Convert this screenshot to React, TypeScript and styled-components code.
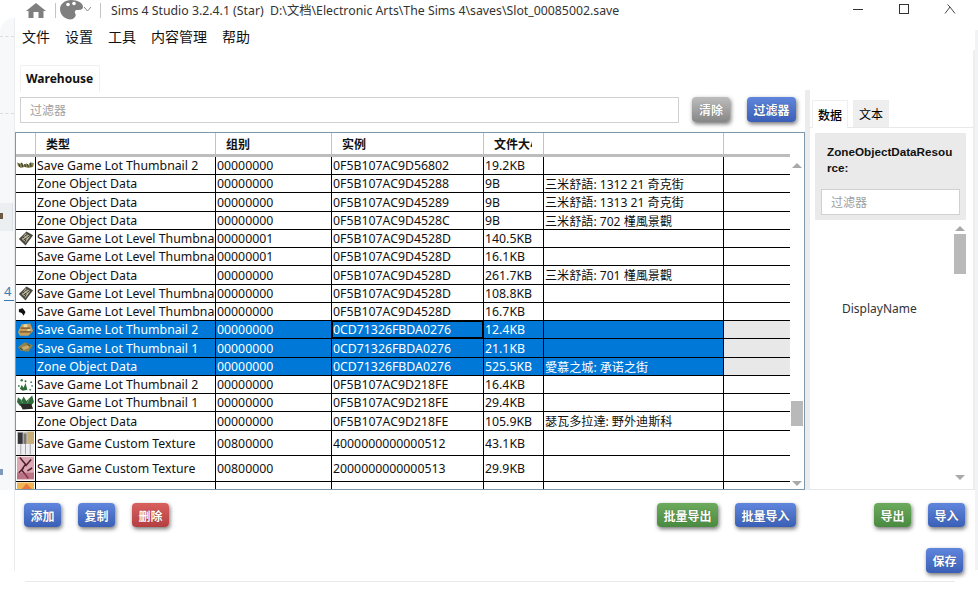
import React, { FC } from 'react'
import styled, { createGlobalStyle } from 'styled-components'

const LATIN = `"Noto Sans", "Noto Sans CJK SC", sans-serif`

const GlobalStyle = createGlobalStyle`
  html, body {
    margin: 0;
    padding: 0;
    background: #fff;
    overflow: hidden;
  }
  * {
    box-sizing: border-box;
  }
`

const Page = styled.div`
  width: 978px;
  height: 589px;
  display: flex;
  background: #fff;
  font-family: ${LATIN};
  color: #111;
  overflow: hidden;
`

const Gutter = styled.div`
  position: relative;
  width: 15px;
  height: 553px;
  margin-top: 18px;
  flex-shrink: 0;
  background: linear-gradient(#f6f8fa 472px, #fff 472px);
  border-top-left-radius: 14px;
  border-right: 1px solid #eaecef;
`

const BehindDash = styled.span<{ $top: number }>`
  position: absolute;
  top: ${p => p.$top}px;
  left: 0;
  width: 14px;
  border-top: 1px dashed #d8dde2;
`

const BehindCard = styled.div`
  position: absolute;
  top: 185px;
  left: 0;
  width: 13px;
  height: 28px;
  background: #eceff1;
  border-right: 1px solid #dcdfe6;
`

const BehindBlip = styled.span<{ $top: number; $color: string }>`
  position: absolute;
  top: ${p => p.$top}px;
  left: 0;
  width: 3px;
  height: 6px;
  background: ${p => p.$color};
`

const BehindLink = styled.span`
  position: absolute;
  top: 265px;
  left: 4px;
  width: 10px;
  font-size: 13px;
  line-height: 17px;
  color: #3a78b5;
  border-bottom: 1px solid #3a78b5;
`

const Main = styled.div`
  width: 960px;
  height: 582px;
  display: flex;
  flex-direction: column;
  flex-shrink: 0;
`

const RightEdge = styled.div`
  width: 3px;
  height: 540px;
  margin-top: 30px;
  background: #f1f3f5;
`

const TitleBar = styled.div`
  height: 24px;
  padding: 0 0 4px 11px;
  display: flex;
  align-items: center;
  flex-shrink: 0;
`

const TitleSep = styled.span<{ $before: number; $after: number }>`
  width: 1px;
  height: 15px;
  margin: 0 ${p => p.$after}px 0 ${p => p.$before}px;
  background: #c4c4c4;
`

const TitleText = styled.span`
  font-size: 12.3px;
  color: #333;
  white-space: nowrap;
  width: 724px;
`

const WinButton = styled.span`
  width: 46px;
  display: flex;
  justify-content: center;
  margin-top: -2px;
`

const MenuBar = styled.div`
  height: 26px;
  padding: 0 0 2px 7px;
  display: flex;
  align-items: center;
  gap: 15px;
  font-family: "Noto Sans CJK SC", sans-serif;
  font-size: 14px;
  flex-shrink: 0;
`

const Panes = styled.div`
  height: 440px;
  display: flex;
  flex-shrink: 0;
`

const LeftPane = styled.div`
  width: 790px;
  padding-top: 15px;
  display: flex;
  flex-direction: column;
  flex-shrink: 0;
`

const TabStrip = styled.div`
  height: 27px;
  padding-left: 5px;
  display: flex;
`

const DocTab = styled.div`
  width: 80px;
  padding-left: 5px;
  font-size: 12px;
  font-weight: 700;
  line-height: 26px;
  border: 1px solid #f0f0f0;
  border-bottom: none;
  border-radius: 2px 2px 0 0;
`

const FilterRow = styled.div`
  margin-top: 5px;
  height: 26px;
  padding-left: 5px;
  display: flex;
  align-items: flex-start;
`

const FilterInput = styled.div<{ $width: number }>`
  width: ${p => p.$width}px;
  height: 26px;
  padding-left: 9px;
  border: 1px solid #d0d0d0;
  font-family: "Noto Sans CJK SC", sans-serif;
  font-size: 12px;
  line-height: 24px;
  color: #a0a0a0;
  background: #fff;
`

const ACTION_COLORS = {
  blue: ['#5f86dc', '#3b5fb6'],
  grey: ['#bdbdbd', '#868686'],
  red: ['#d9605f', '#b53f40'],
  green: ['#6cab5e', '#4a8a40'],
}

const ActionButton = styled.button<{ $tone: keyof typeof ACTION_COLORS; $width: number; $height?: number; $left?: number }>`
  width: ${p => p.$width}px;
  height: ${p => p.$height || 24}px;
  margin-left: ${p => p.$left || 0}px;
  padding: 0;
  flex-shrink: 0;
  border: none;
  border-radius: 4px;
  background: linear-gradient(${p => ACTION_COLORS[p.$tone][0]}, ${p => ACTION_COLORS[p.$tone][1]});
  box-shadow: 1px 2px 4px rgba(0, 0, 0, 0.55);
  color: #fff;
  font-family: "Noto Sans CJK SC", sans-serif;
  font-size: 12px;
  font-weight: 700;
  text-shadow: 0 0 1px rgba(0, 0, 0, 0.4);
`

const Table = styled.div`
  margin-top: 9px;
  height: 358px;
  border: 1px solid #7d97ad;
  display: flex;
  overflow: hidden;
  background: #fff;
`

const Grid = styled.div`
  width: 774px;
  flex-shrink: 0;
`

const HeaderRow = styled.div`
  display: flex;
  height: 24px;
  border-bottom: 3px solid #bdbdbd;
`

const HeaderCell = styled.div<{ $width: number }>`
  width: ${p => p.$width}px;
  padding-left: 10px;
  font-family: "Noto Sans CJK SC", sans-serif;
  font-size: 12px;
  font-weight: 700;
  line-height: 21px;
  border-right: 1px solid #bcc5cc;
  overflow: hidden;
  white-space: nowrap;
  flex-shrink: 0;
  &:last-child {
    border-right: none;
  }
`

const HeaderLabel = styled.span<{ $clip?: number }>`
  display: block;
  width: ${p => (p.$clip ? `${p.$clip}px` : 'auto')};
  overflow: hidden;
`

const Row = styled.div<{ $height: number; $selected?: boolean }>`
  display: flex;
  height: ${p => p.$height}px;
  border-bottom: 1px solid #000;
  color: ${p => (p.$selected ? '#fff' : '#111')};
`

const Cell = styled.div<{ $width: number; $selected?: boolean; $focus?: boolean }>`
  position: relative;
  width: ${p => p.$width}px;
  flex-shrink: 0;
  padding-left: 1px;
  display: flex;
  align-items: center;
  font-size: 12.3px;
  white-space: nowrap;
  overflow: hidden;
  border-right: 1px solid #000;
  background: ${p => (p.$selected ? '#0078d7' : '#fff')};
  box-shadow: ${p => (p.$focus ? 'inset 0 0 0 1px #000' : 'none')};
`

const NameText = styled.span`
  font-family: ${LATIN};
  font-size: 12.1px;
`

const IconCell = styled(Cell)`
  padding: 0 1px;
  justify-content: center;
  align-items: flex-start;
`

const FillerCell = styled.div<{ $selected?: boolean }>`
  flex: 1;
  background: ${p => (p.$selected ? '#e8e8e8' : '#fff')};
`

const ScrollBar = styled.div<{ $width: number }>`
  width: ${p => p.$width}px;
  display: flex;
  flex-direction: column;
  align-items: center;
  flex-shrink: 0;
`

const ArrowUp = styled.span<{ $top: number }>`
  margin-top: ${p => p.$top}px;
  border-left: 5px solid transparent;
  border-right: 5px solid transparent;
  border-bottom: 5px solid #a9a9a9;
`

const ArrowDown = styled.span<{ $bottom: number }>`
  margin-top: auto;
  margin-bottom: ${p => p.$bottom}px;
  border-left: 5px solid transparent;
  border-right: 5px solid transparent;
  border-top: 5px solid #a9a9a9;
`

const Thumb = styled.span<{ $top: number; $height: number }>`
  width: 12px;
  height: ${p => p.$height}px;
  margin-top: ${p => p.$top}px;
  background: #b9b9b9;
`

const Splitter = styled.div`
  width: 5px;
  margin-top: 40px;
  background: #ececec;
  flex-shrink: 0;
`

const SidePane = styled.div`
  width: 165px;
  height: 440px;
  padding-top: 50px;
  display: flex;
  flex-direction: column;
  border-bottom: 1px solid #e6e6e6;
  border-right: 2px solid #eee;
`

const SideTabs = styled.div`
  height: 28px;
  padding-left: 2px;
  display: flex;
  gap: 5px;
  border-bottom: 1px solid #e8e8e8;
  flex-shrink: 0;
`

const SideTab = styled.div<{ $active?: boolean }>`
  width: 36px;
  height: ${p => (p.$active ? 28 : 27)}px;
  text-align: center;
  font-family: "Noto Sans CJK SC", sans-serif;
  font-size: 12px;
  font-weight: ${p => (p.$active ? 500 : 400)};
  line-height: 28px;
  background: ${p => (p.$active ? '#fff' : '#eee')};
  border: ${p => (p.$active ? '1px solid #eee' : 'none')};
  border-bottom: none;
  color: #000;
`

const SideCard = styled.div`
  margin: 5px 0 0 5px;
  width: 151px;
  height: 87px;
  padding: 11px 6px 0;
  background: #eaeaea;
  flex-shrink: 0;
`

const SideTitle = styled.div`
  padding: 0 7px 0 6px;
  font-family: "Liberation Sans", sans-serif;
  font-size: 11.7px;
  font-weight: 700;
  line-height: 16px;
  height: 32px;
  margin-bottom: 13px;
  word-break: break-all;
`

const SideBody = styled.div`
  flex: 1;
  display: flex;
`

const DisplayName = styled.div`
  width: 143px;
  padding: 80px 0 0 32px;
  font-size: 12px;
  color: #333;
`

const Footer = styled.div`
  flex: 1;
  padding: 13px 12px 0 9px;
  display: flex;
  flex-direction: column;
`

const FooterRow = styled.div`
  display: flex;
`

const SaveRow = styled.div`
  margin-top: 21px;
  display: flex;
  justify-content: flex-end;
`

const BottomLine = styled.div`
  height: 1px;
  margin: 0 20px 0 10px;
  background: #eaeaea;
  flex-shrink: 0;
`

const HomeIcon = () => (
  <svg width="20" height="15" viewBox="0 0 20 15">
    <path d="M10 0 L20 8 L17.5 8 L17.5 15 L12.5 15 L12.5 9 L7.5 9 L7.5 15 L2.5 15 L2.5 8 L0 8 Z" fill="#7f7f7f" />
  </svg>
)

const PaletteIcon = () => (
  <svg width="32" height="20" viewBox="0 0 32 20">
    <path d="M11 0 C18 0 23 3 23 7 C23 10 19 10 17 10 C14.5 10 14.5 12.5 15.5 14 C16.5 16 14 19.5 10 19.5 C4 19 0 14 0 9 C0 4 5 0 11 0 Z" fill="#7f7f7f" />
    <circle cx="8" cy="4.5" r="1.8" fill="#fff" />
    <circle cx="14" cy="3.5" r="1.8" fill="#fff" />
    <path d="M24 7 L27.5 11 L31 7" fill="none" stroke="#8a8a8a" strokeWidth="1" />
  </svg>
)

const MinimizeIcon = () => (
  <svg width="12" height="10" viewBox="0 0 12 10">
    <path d="M1 5.5 H11" stroke="#333" strokeWidth="1" />
  </svg>
)

const MaximizeIcon = () => (
  <svg width="12" height="10" viewBox="0 0 12 10">
    <rect x="1.5" y="0.5" width="9" height="9" fill="none" stroke="#333" />
  </svg>
)

const CloseIcon = () => (
  <svg width="12" height="10" viewBox="0 0 12 10">
    <path d="M1 9.5 L6 3 L11 9.5 M6 3 L3.5 0.5" fill="none" stroke="#333" strokeWidth="0.9" />
  </svg>
)

type LotKind = 'strip' | 'diamond' | 'speck' | 'town' | 'tank' | 'plants' | 'bush' | 'wall' | 'rose' | 'orange'

const LotThumb: FC<{ kind: LotKind }> = ({ kind }) => {
  const size = { width: 18, height: 18, viewBox: '0 0 18 18' }
  switch (kind) {
    case 'strip':
      return (
        <svg {...size}>
          <path d="M0 5 L3 7 L5 5 L7 8 L10 6 L12 8 L14 5 L18 6 L17 10 L12 11 L8 10 L4 11 L1 9 Z" fill="#8a8455" />
          <path d="M2 6 L3 10 M5 6 L6 10 M8 7 L9 10 M11 7 L12 10 M14 6 L15 10" stroke="#2f3320" strokeWidth="1" />
        </svg>
      )
    case 'diamond':
      return (
        <svg {...size}>
          <path d="M10 1 L17 5 L9 16 L2 9 Z" fill="#4a483c" />
          <path d="M9 3 L14 6 L9 13 L5 9 Z" fill="#b5b19c" />
          <path d="M6 8 L11 4 M7 10 L13 6 M8 12 L10 9" stroke="#26241d" strokeWidth="1" />
          <path d="M8 6 L10 8 M10 10 L12 7" stroke="#e4e0cc" strokeWidth="0.7" />
        </svg>
      )
    case 'speck':
      return (
        <svg {...size}>
          <path d="M2 6 L6 5 L9 9 L7 13 L5 10 L2 9 Z" fill="#111" />
        </svg>
      )
    case 'town':
      return (
        <svg {...size}>
          <path d="M1 11 L5 3 L14 2 L17 10 L12 15 L3 15 Z" fill="#c79f58" />
          <path d="M4 7 H14 M3 11 H15" stroke="#75522a" strokeWidth="1.4" />
          <rect x="7" y="3" width="4" height="3" fill="#e8d9a9" />
          <rect x="11" y="8" width="3" height="2" fill="#e8d9a9" />
        </svg>
      )
    case 'tank':
      return (
        <svg {...size}>
          <path d="M1 8 L8 3 L17 6 L12 13 L4 12 Z" fill="#8c8350" />
          <path d="M5 8 L12 6 L13 9 L7 11 Z" fill="#c9aa69" />
          <path d="M3 9 L6 11 M11 5 L14 7" stroke="#3f3c22" strokeWidth="1" />
        </svg>
      )
    case 'plants':
      return (
        <svg {...size}>
          <path d="M3 13 L5 9 L7 12 L9 7 L11 14 L6 15 Z" fill="#2f6b3b" />
          <circle cx="5" cy="4" r="1.3" fill="#2f7a40" />
          <circle cx="9" cy="5" r="1" fill="#1f5a2c" />
          <circle cx="2" cy="10" r="1" fill="#3d8a4b" />
          <circle cx="15" cy="6" r="1" fill="#4c7f58" />
          <circle cx="16" cy="10" r="1" fill="#6d9a76" />
          <circle cx="14" cy="14" r="1" fill="#4c7f58" />
        </svg>
      )
    case 'bush':
      return (
        <svg {...size}>
          <path d="M1 3 L5 6 L7 2 L10 7 L16 1 L18 8 L15 12 L3 12 L0 8 Z" fill="#2e6a3a" />
          <path d="M3 10 H15 L17 15 L6 16 Z" fill="#2b2a24" />
          <path d="M4 5 L6 9 M13 4 L11 9" stroke="#7fae83" strokeWidth="0.8" />
        </svg>
      )
    default:
      return null
  }
}

const TextureThumb: FC<{ kind: 'wall' | 'rose' }> = ({ kind }) =>
  kind === 'wall' ? (
    <svg width="18" height="24" viewBox="0 0 18 24">
      <rect width="18" height="24" fill="#c9c6c0" />
      <rect x="11" width="7" height="13" fill="#c7ad78" />
      <rect x="1" y="1" width="5" height="12" fill="#35343a" />
      <rect x="7" y="2" width="3" height="11" fill="#7d7770" />
      <rect y="13" width="18" height="11" fill="#eeeef0" />
      <path d="M4 13 V24 M9 13 V24 M14 13 V24" stroke="#9fa0a8" />
    </svg>
  ) : (
    <svg width="18" height="24" viewBox="0 0 18 24">
      <rect width="18" height="24" fill="#dba8b4" />
      <path d="M3 1 L9 8 L5 14 L12 23 M15 3 L9 10 M7 12 L2 17 M11 15 L16 12" stroke="#4f1c2b" strokeWidth="1.6" fill="none" />
      <rect y="17" width="18" height="7" fill="#a3475e" opacity="0.55" />
    </svg>
  )

const OrangeThumb = () => (
  <svg width="18" height="18" viewBox="0 0 18 18">
    <rect width="18" height="18" fill="#f3b452" />
    <path d="M4 8 L10 1 L17 8 Z" fill="#ea7a3c" />
  </svg>
)

const RowIcon: FC<{ kind?: LotKind }> = ({ kind }) => {
  if (!kind) return null
  if (kind === 'wall' || kind === 'rose') return <TextureThumb kind={kind} />
  if (kind === 'orange') return <OrangeThumb />
  return <LotThumb kind={kind} />
}

const COLUMNS = [20, 180, 116, 152, 60, 180]

type RowData = {
  icon?: LotKind
  type: string
  group: string
  instance: string
  size: string
  name?: string
  height: number
  selected?: boolean
  focus?: boolean
}

const ZONE = 'Zone Object Data'
const LEVEL = 'Save Game Lot Level Thumbnail'
const THUMB_1 = 'Save Game Lot Thumbnail 1'
const THUMB_2 = 'Save Game Lot Thumbnail 2'
const CUSTOM = 'Save Game Custom Texture'

const ROWS: RowData[] = [
  { icon: 'strip', type: THUMB_2, group: '00000000', instance: '0F5B107AC9D56802', size: '19.2KB', height: 18 },
  { type: ZONE, group: '00000000', instance: '0F5B107AC9D45288', size: '9B', name: '三米舒語: 1312 21 奇克街', height: 18 },
  { type: ZONE, group: '00000000', instance: '0F5B107AC9D45289', size: '9B', name: '三米舒語: 1313 21 奇克街', height: 19 },
  { type: ZONE, group: '00000000', instance: '0F5B107AC9D4528C', size: '9B', name: '三米舒語: 702 槿風景觀', height: 18 },
  { icon: 'diamond', type: LEVEL, group: '00000001', instance: '0F5B107AC9D4528D', size: '140.5KB', height: 18 },
  { type: LEVEL, group: '00000001', instance: '0F5B107AC9D4528D', size: '16.1KB', height: 18 },
  { type: ZONE, group: '00000000', instance: '0F5B107AC9D4528D', size: '261.7KB', name: '三米舒語: 701 槿風景觀', height: 19 },
  { icon: 'diamond', type: LEVEL, group: '00000000', instance: '0F5B107AC9D4528D', size: '108.8KB', height: 18 },
  { icon: 'speck', type: LEVEL, group: '00000000', instance: '0F5B107AC9D4528D', size: '16.7KB', height: 18 },
  { icon: 'town', type: THUMB_2, group: '00000000', instance: '0CD71326FBDA0276', size: '12.4KB', height: 18, selected: true, focus: true },
  { icon: 'tank', type: THUMB_1, group: '00000000', instance: '0CD71326FBDA0276', size: '21.1KB', height: 19, selected: true },
  { type: ZONE, group: '00000000', instance: '0CD71326FBDA0276', size: '525.5KB', name: '愛慕之城: 承诺之街', height: 18, selected: true },
  { icon: 'plants', type: THUMB_2, group: '00000000', instance: '0F5B107AC9D218FE', size: '16.4KB', height: 18 },
  { icon: 'bush', type: THUMB_1, group: '00000000', instance: '0F5B107AC9D218FE', size: '29.4KB', height: 18 },
  { type: ZONE, group: '00000000', instance: '0F5B107AC9D218FE', size: '105.9KB', name: '瑟瓦多拉達: 野外迪斯科', height: 19 },
  { icon: 'wall', type: CUSTOM, group: '00800000', instance: '4000000000000512', size: '43.1KB', height: 25 },
  { icon: 'rose', type: CUSTOM, group: '00800000', instance: '2000000000000513', size: '29.9KB', height: 26 },
  { icon: 'orange', type: '', group: '', instance: '', size: '', height: 26 },
]

const App: FC = () => {
  return (
    <>
      <GlobalStyle />
      <Page>
        <Gutter>
          <BehindDash $top={18} />
          <BehindDash $top={95} />
          <BehindCard />
          <BehindBlip $top={195} $color="#6e5a44" />
          <BehindLink>4</BehindLink>
          <BehindBlip $top={451} $color="#7d9ab8" />
        </Gutter>
        <Main>
          <TitleBar>
            <HomeIcon />
            <TitleSep $before={9} $after={4} />
            <PaletteIcon />
            <TitleSep $before={8} $after={10} />
            <TitleText>Sims 4 Studio 3.2.4.1 (Star)&nbsp;&nbsp;D:\文档\Electronic Arts\The Sims 4\saves\Slot_00085002.save</TitleText>
            <WinButton><MinimizeIcon /></WinButton>
            <WinButton><MaximizeIcon /></WinButton>
            <WinButton><CloseIcon /></WinButton>
          </TitleBar>
          <MenuBar>
            <span>文件</span>
            <span>设置</span>
            <span>工具</span>
            <span>内容管理</span>
            <span>帮助</span>
          </MenuBar>
          <Panes>
            <LeftPane>
              <TabStrip>
                <DocTab>Warehouse</DocTab>
              </TabStrip>
              <FilterRow>
                <FilterInput $width={659}>过滤器</FilterInput>
                <ActionButton $tone="grey" $width={38} $height={25} $left={13}>清除</ActionButton>
                <ActionButton $tone="blue" $width={49} $height={25} $left={17}>过滤器</ActionButton>
              </FilterRow>
              <Table>
                <Grid>
                  <HeaderRow>
                    <HeaderCell $width={20} />
                    <HeaderCell $width={180}>类型</HeaderCell>
                    <HeaderCell $width={116}>组别</HeaderCell>
                    <HeaderCell $width={152}>实例</HeaderCell>
                    <HeaderCell $width={60}><HeaderLabel $clip={38}>文件大小</HeaderLabel></HeaderCell>
                    <HeaderCell $width={180} />
                    <HeaderCell $width={66} />
                  </HeaderRow>
                  {ROWS.map((row, i) => (
                    <Row key={i} $height={row.height} $selected={row.selected}>
                      <IconCell $width={COLUMNS[0]} $selected={row.selected}><RowIcon kind={row.icon} /></IconCell>
                      <Cell $width={COLUMNS[1]} $selected={row.selected}>{row.type}</Cell>
                      <Cell $width={COLUMNS[2]} $selected={row.selected}>{row.group}</Cell>
                      <Cell $width={COLUMNS[3]} $selected={row.selected} $focus={row.focus}>{row.instance}</Cell>
                      <Cell $width={COLUMNS[4]} $selected={row.selected}>{row.size}</Cell>
                      <Cell $width={COLUMNS[5]} $selected={row.selected}><NameText>{row.name}</NameText></Cell>
                      <FillerCell $selected={row.selected} />
                    </Row>
                  ))}
                </Grid>
                <ScrollBar $width={13}>
                  <ArrowUp $top={30} />
                  <Thumb $top={233} $height={25} />
                  <ArrowDown $bottom={3} />
                </ScrollBar>
              </Table>
            </LeftPane>
            <Splitter />
            <SidePane>
              <SideTabs>
                <SideTab $active>数据</SideTab>
                <SideTab>文本</SideTab>
              </SideTabs>
              <SideCard>
                <SideTitle>ZoneObjectDataResource:</SideTitle>
                <FilterInput $width={139}>过滤器</FilterInput>
              </SideCard>
              <SideBody>
                <DisplayName>DisplayName</DisplayName>
                <ScrollBar $width={14}>
                  <ArrowUp $top={6} />
                  <Thumb $top={3} $height={40} />
                  <ArrowDown $bottom={9} />
                </ScrollBar>
              </SideBody>
            </SidePane>
          </Panes>
          <Footer>
            <FooterRow>
              <ActionButton $tone="blue" $width={37}>添加</ActionButton>
              <ActionButton $tone="blue" $width={37} $left={17}>复制</ActionButton>
              <ActionButton $tone="red" $width={37} $left={17}>删除</ActionButton>
              <ActionButton $tone="green" $width={61} $left={488}>批量导出</ActionButton>
              <ActionButton $tone="blue" $width={61} $left={17}>批量导入</ActionButton>
              <ActionButton $tone="green" $width={37} $left={78}>导出</ActionButton>
              <ActionButton $tone="blue" $width={37} $left={17}>导入</ActionButton>
            </FooterRow>
            <SaveRow>
              <ActionButton $tone="blue" $width={37} $height={25}>保存</ActionButton>
            </SaveRow>
          </Footer>
          <BottomLine />
        </Main>
        <RightEdge />
      </Page>
    </>
  )
}

export default App
